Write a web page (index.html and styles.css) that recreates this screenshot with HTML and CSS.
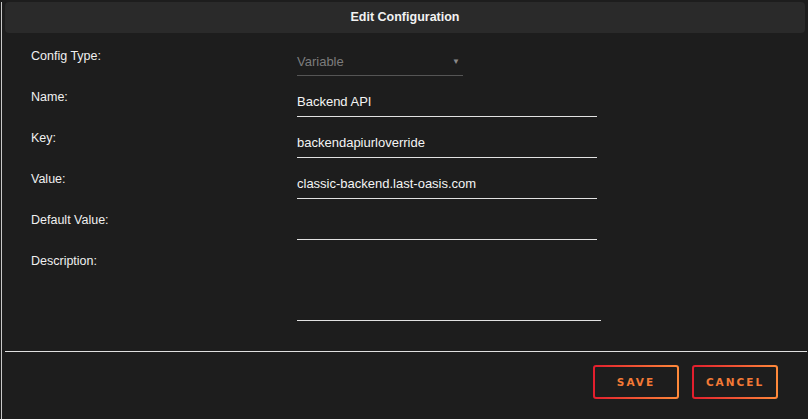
FILE: index.html
```html
<!DOCTYPE html>
<html lang="en">

<head>
    <meta charset="UTF-8" />
    <meta name="viewport" content="width=device-width, initial-scale=1.0" />
    <title>Edit Configuration</title>
    <link rel="stylesheet" href="styles.css">
</head>

<body>
    <div class="dialog">
        <div class="dialog-header">Edit Configuration</div>

        <!-- Form -->
        <div class="form">
            <div class="row">
                <div class="label">Config Type:</div>
                <div class="field select">
                    <span>Variable</span>
                    <span class="caret">&#9660;</span>
                </div>
            </div>
            <div class="row">
                <div class="label">Name:</div>
                <div class="field">Backend API</div>
            </div>
            <div class="row">
                <div class="label">Key:</div>
                <div class="field">backendapiurloverride</div>
            </div>
            <div class="row">
                <div class="label">Value:</div>
                <div class="field">classic-backend.last-oasis.com</div>
            </div>
            <div class="row">
                <div class="label">Default Value:</div>
                <div class="field"></div>
            </div>
            <div class="row">
                <div class="label">Description:</div>
                <div class="field textarea"></div>
            </div>
        </div>

        <div class="divider"></div>

        <div class="actions">
            <button class="btn">SAVE</button>
            <button class="btn">CANCEL</button>
        </div>
    </div>
</body>

</html>
```

FILE: styles.css
```css
body {
    margin: 0;
    background: #1d1d1d;
    font-family: 'Liberation Sans', Arial, sans-serif;
    color: #ececec;
    height: 100vh;
    overflow: hidden;
}

.dialog {
    margin-left: 1px;
    height: 100%;
    border-left: 1px solid #c9c9c9;
    box-sizing: border-box;
}

.dialog-header {
    margin: 2px 3px 0 3px;
    height: 31px;
    line-height: 31px;
    background: #2a2a2a;
    border-radius: 4px;
    text-align: center;
    font-size: 12.5px;
    font-weight: bold;
    color: #f2f2f2;
}

.form {
    padding: 12px 0 0 29px;
    display: flex;
    flex-direction: column;
    gap: 10px;
}

.row {
    display: flex;
    align-items: flex-start;
}

.label {
    width: 266px;
    padding-top: 1px;
    line-height: 20px;
    font-size: 12.5px;
    color: #f0f0f0;
}

.field {
    width: 300px;
    height: 31px;
    box-sizing: border-box;
    padding-top: 8px;
    line-height: 16px;
    font-size: 13px;
    border-bottom: 1px solid #e2e2e2;
    color: #f4f4f4;
}

.field.select {
    width: 166px;
    padding-top: 9px;
    display: flex;
    justify-content: space-between;
    color: #7c7c7c;
    border-bottom-color: #555;
}

.caret {
    font-size: 8px;
    margin-right: 3px;
    color: #8a8a8a;
}

.field.textarea {
    width: 304px;
    height: 71px;
}

.divider {
    margin: 30px 1px 0 3px;
    border-top: 1px solid #e0e0e0;
}

.actions {
    display: flex;
    justify-content: flex-end;
    gap: 13px;
    padding: 13px 30px 0 0;
}

.btn {
    width: 86px;
    height: 34px;
    border: 2px solid transparent;
    border-radius: 3px;
    background: linear-gradient(#1d1d1d, #1d1d1d) padding-box,
        linear-gradient(90deg, #e21d2d, #ff8a3a) border-box;
    color: #f47a36;
    font-family: 'DejaVu Sans', sans-serif;
    font-size: 10.5px;
    font-weight: bold;
    letter-spacing: 2px;
    cursor: pointer;
}
```
